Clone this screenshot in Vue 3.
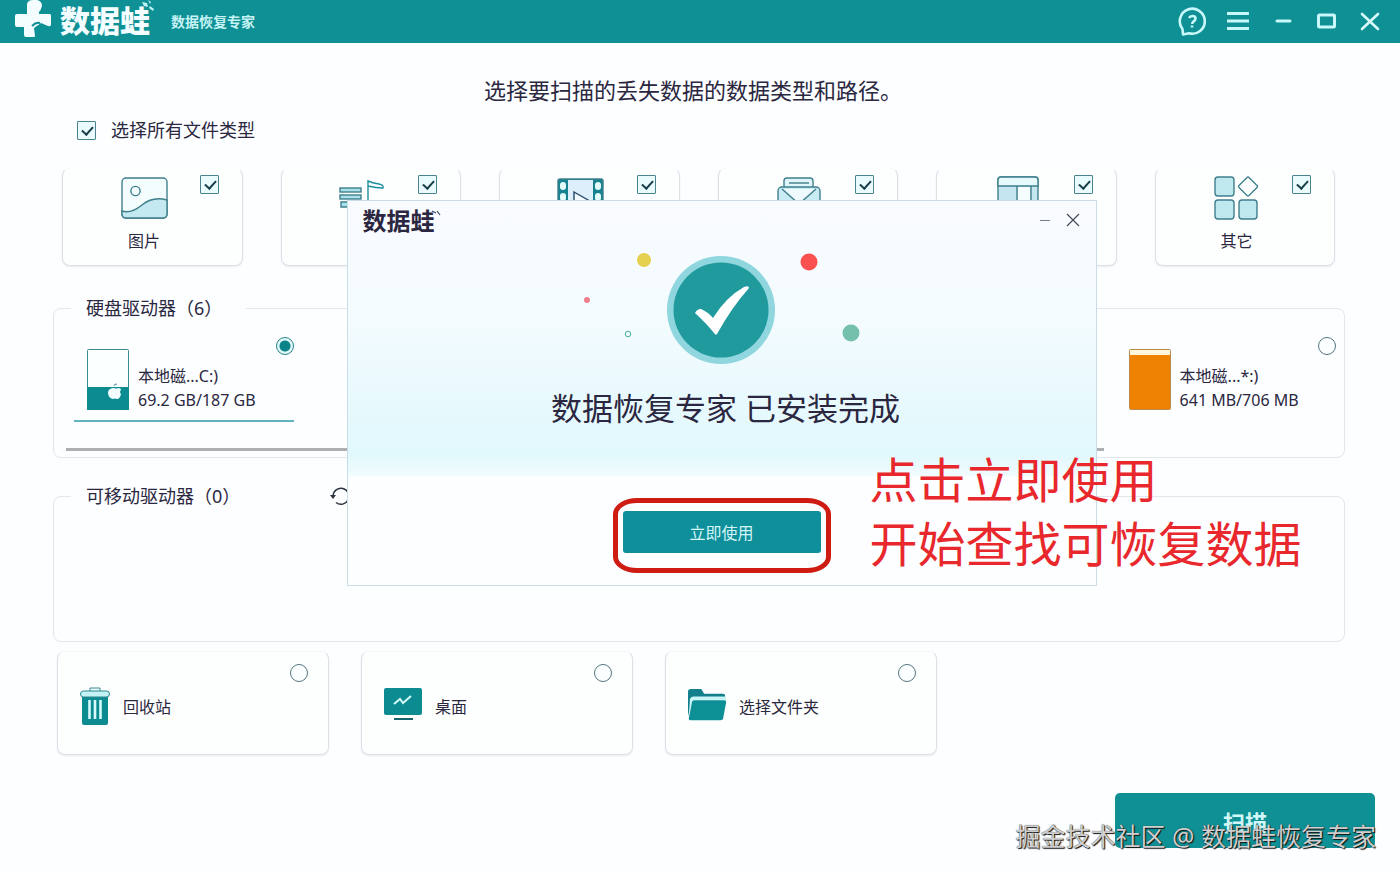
<template>
  <div class="app">
    <header class="topbar">
      <div class="brand">
        <svg class="brand-mark" width="38" height="40" viewBox="0 0 38 40">
          <path d="M13 12V4Q14 0 19 0h4q5 1 5 6-1 4-3 6v2h11q1 0 1 2v9q-1 2-3 1l-7-3-7 5 1 8q0 1-1 1h-8q-2 0-2-2V27H3q-2 0-2-2v-9q0-2 2-2h10z" fill="#f4fdff" />
          <path d="M18 26q4-4 8-3" fill="none" stroke="#0e8f94" stroke-width="2" />
        </svg>
        <span class="brand-name">数据蛙</span>
        <svg class="brand-leaf" width="12" height="12" viewBox="0 0 12 12">
          <path d="M0 2l5 1 1 4-4-1zM8 6l4 3-1 2-4-3zM6 0l3 2-1 2z" fill="#bff3f5" />
        </svg>
        <span class="brand-sub">数据恢复专家</span>
      </div>
      <nav class="window-tools">
        <button class="tool-btn help" aria-label="帮助">
          <svg width="28" height="30" viewBox="0 0 28 30" fill="none" stroke="#c9f8fa" stroke-width="2.6">
            <path d="M5 27.500L4.500 22A12.500 12.500 0 1 1 11 26.300z" stroke-linejoin="round" />
            <path d="M11 11q1-2 3.500-2 3 0 3 2.500 0 1.500-2 3-1.200 1-1.200 2.500M14 18.500v2" />
          </svg>
        </button>
        <button class="tool-btn" aria-label="菜单">
          <svg width="24" height="24" viewBox="0 0 24 24" stroke="#c9f8fa" stroke-width="3">
            <path d="M1 3.500h22M1 11h22M1 18.500h22" />
          </svg>
        </button>
        <button class="tool-btn" aria-label="最小化">
          <svg width="24" height="24" viewBox="0 0 24 24" stroke="#c9f8fa" stroke-width="3" stroke-linecap="round">
            <path d="M7 11h13" />
          </svg>
        </button>
        <button class="tool-btn" aria-label="最大化">
          <svg width="24" height="24" viewBox="0 0 24 24" fill="none" stroke="#c9f8fa" stroke-width="3">
            <rect x="4.500" y="5" width="16" height="12" rx="1" />
          </svg>
        </button>
        <button class="tool-btn" aria-label="关闭">
          <svg width="24" height="24" viewBox="0 0 24 24" stroke="#d9fafb" stroke-width="2.600" stroke-linecap="round">
            <path d="M4 4l16 15M20 4L4 19" />
          </svg>
        </button>
      </nav>
    </header>

    <main class="content">
      <h1 class="heading">选择要扫描的丢失数据的数据类型和路径。</h1>

      <label class="select-all">
        <input v-model="allChecked" type="checkbox" class="check" />
        <span>选择所有文件类型</span>
      </label>

      <!-- 文件类型 -->
      <div class="types">
        <label v-for="item in fileTypes" :key="item.id" class="type-card">
          <span class="type-main">
            <svg class="type-icon" width="48" height="46" viewBox="0 0 48 46" fill="none" stroke="#3f7f8c" stroke-width="1.400">
              <template v-if="item.id === 'image'">
                <rect x="2" y="3" width="45" height="40" rx="4" fill="#f3fdfe" />
                <path d="M2 36q9 3 20-6t25-5v14q0 4-4 4H6q-4 0-4-4z" fill="#c5e9f0" />
                <circle cx="15.500" cy="16" r="4.600" />
              </template>
              <template v-else-if="item.id === 'audio'">
                <rect x="1" y="13" width="21" height="4" fill="#a9e0ea" />
                <rect x="1" y="20" width="21" height="4" fill="#a9e0ea" />
                <path d="M2 27h10v5H2z" fill="#a9e0ea" />
                <path d="M29 30V6q4 2 11 3 5 1 4 4-7 0-15-2" stroke="#1f8fa0" />
                <ellipse cx="24" cy="33" rx="5" ry="4" />
              </template>
              <template v-else-if="item.id === 'video'">
                <rect x="1" y="4" width="45" height="38" rx="2" fill="#15828f" />
                <rect x="11" y="5" width="25" height="36" fill="#dceffb" stroke="none" />
                <path d="M17 17l14 8-14 9z" fill="#f4fbff" stroke="#27486a" />
                <g fill="#e4fbfc" stroke="none">
                  <rect x="3" y="7" width="6" height="8" rx="3" />
                  <rect x="3" y="18" width="6" height="8" rx="3" />
                  <rect x="3" y="29" width="6" height="8" rx="3" />
                  <rect x="38" y="7" width="6" height="8" rx="3" />
                  <rect x="38" y="18" width="6" height="8" rx="3" />
                  <rect x="38" y="29" width="6" height="8" rx="3" />
                </g>
              </template>
              <template v-else-if="item.id === 'mail'">
                <path d="M8 12V6q0-3 3-3h23q3 0 3 3v6" fill="#dff5fa" />
                <path d="M13 8h20" />
                <rect x="2" y="12" width="42" height="30" rx="4" fill="#c9ebf3" />
                <path d="M6 14l17 15 17-15" fill="#eefafd" />
              </template>
              <template v-else-if="item.id === 'doc'">
                <rect x="4" y="2" width="40" height="40" rx="3" fill="#c5e6f0" />
                <path d="M4 11V5q0-3 3-3h34q3 0 3 3v6z" fill="#e6fafc" />
                <path d="M24 12h12v29H24z" fill="#f5fcfe" stroke="none" />
                <path d="M23 11v31M37 11v31" />
              </template>
              <template v-else>
                <rect x="2" y="2" width="19" height="19" rx="3" fill="#bfe9ee" />
                <path d="M36 2.500l8 8q1 1 0 2l-8 8q-1 1-2 0l-8-8q-1-1 0-2l8-8q1-1 2 0z" />
                <rect x="2" y="25" width="19" height="19" rx="3" fill="#bfe9ee" />
                <rect x="26" y="25" width="18" height="19" rx="3" fill="#bfe9ee" />
              </template>
            </svg>
            <span class="type-name">{{ item.name }}</span>
          </span>
          <input v-model="item.checked" type="checkbox" class="check" />
        </label>
      </div>

      <!-- 硬盘驱动器 -->
      <fieldset class="group hard">
        <legend>硬盘驱动器（6）</legend>
        <div class="drives">
          <label
            v-for="drive in drives"
            :key="drive.id"
            class="drive"
            :class="{ selected: target === drive.id }"
          >
            <svg class="drive-icon" width="42" height="61" viewBox="0 0 42 61">
              <template v-if="drive.full">
                <rect x="0.500" y="0.500" width="41" height="60" rx="1" fill="#fff6dc" stroke="#b98a4a" />
                <rect x="1" y="6" width="40" height="54" fill="#ef8200" />
              </template>
              <template v-else>
                <rect x="0.500" y="0.500" width="41" height="60" rx="1" fill="#fcffff" stroke="#3b8b95" />
                <rect x="0" y="38" width="42" height="23" fill="#0c8b91" />
                <path d="M27 39q2 1 4 0 3 0 3 2-2 2 0 4-1 5-4 5-2-1-4 0-5-1-5-7 1-4 6-4z" fill="#f6ffff" />
                <path d="M27 37q0-2 3-2" fill="none" stroke="#3b8b95" />
              </template>
            </svg>
            <span class="drive-info">
              <span>{{ drive.name }}</span>
              <span>{{ drive.size }}</span>
            </span>
            <input v-model="target" type="radio" name="target" class="radio" :value="drive.id" />
          </label>
        </div>
        <div class="scroll-track"><div class="scroll-thumb"></div></div>
      </fieldset>

      <!-- 可移动驱动器 -->
      <fieldset class="group removable">
        <legend>
          <span>可移动驱动器（0）</span>
          <button class="refresh" aria-label="刷新">
            <svg width="20" height="20" viewBox="0 0 20 20" fill="none" stroke="#2c3440" stroke-width="1.400">
              <path d="M3 10a8 8 0 1 1 3 6.500" />
              <path d="M0 9l6 0-3 4z" fill="#2c3440" stroke="none" />
            </svg>
          </button>
        </legend>
      </fieldset>

      <!-- 其它位置 -->
      <div class="places">
        <label v-for="place in places" :key="place.id" class="place">
          <svg v-if="place.id === 'trash'" width="30" height="38" viewBox="0 0 30 38">
            <path d="M2 9h26v27q0 2-2 2H4q-2 0-2-2z" fill="#0c8b91" />
            <path d="M10 4V1h10v3" fill="#eafcfd" stroke="#3f8790" />
            <rect x="0.500" y="4" width="29" height="6" rx="3" fill="#c4f2f5" stroke="#2f8790" />
            <path d="M9.500 13v19M15 13v19M20.500 13v19" stroke="#d8fbfc" stroke-width="2.600" />
          </svg>
          <svg v-else-if="place.id === 'desktop'" width="38" height="38" viewBox="0 0 38 38">
            <rect x="0" y="1" width="38" height="27" rx="2" fill="#0c8b91" />
            <path d="M10 17l6-5 3 4 8-7" fill="none" stroke="#d8fbfc" stroke-width="2" />
            <path d="M10 32h19" stroke="#17646c" stroke-width="2" />
          </svg>
          <svg v-else width="38" height="38" viewBox="0 0 40 38">
            <path d="M0 4q0-3 3-3h11l3 5h20q2 0 2 2v4H4L0 30z" fill="#127f8c" />
            <path d="M2 12q1-3 4-3h34v4H8q-3 0-4 3L1 30z" fill="#c9f5f7" />
            <path d="M7 13h31q3 0 2 3l-3 16q0 2-3 2H3q-3 0-2-3l3-15q0-3 3-3z" fill="#0c9095" />
          </svg>
          <span class="place-name">{{ place.name }}</span>
          <input v-model="target" type="radio" name="target" class="radio" :value="place.id" />
        </label>
      </div>

      <div class="actions">
        <button class="scan-btn">扫描</button>
      </div>
    </main>

    <!-- 安装完成弹窗 -->
    <div v-if="showDialog" class="overlay">
      <section class="dialog" role="dialog" aria-label="安装完成">
        <div class="dialog-top">
          <div class="dialog-bar">
            <span class="dialog-logo">数据蛙</span>
            <svg class="dialog-leaf" width="10" height="10" viewBox="0 0 10 10">
              <path d="M1 2l4 2M6 2l3 4" stroke="#39435a" stroke-width="1.200" />
            </svg>
            <button class="dialog-btn" aria-label="最小化">
              <svg width="16" height="16" viewBox="0 0 16 16" stroke="#777e88">
                <path d="M3 7.500h10" />
              </svg>
            </button>
            <button class="dialog-btn" aria-label="关闭" @click="showDialog = false">
              <svg width="16" height="16" viewBox="0 0 16 16" stroke="#454b55" stroke-width="1.200">
                <path d="M2 1l12 12M14 1L2 13" />
              </svg>
            </button>
          </div>
          <svg class="success" width="300" height="120" viewBox="0 0 300 120">
            <circle cx="149" cy="62" r="54" fill="#8fd6de" />
            <circle cx="149" cy="62" r="47.500" fill="#219a9e" />
            <path d="M123 65q2-4 6-4 7 3 12 9 13-21 31-31 5-2 5 1-17 19-32 46-1 2-3-1-7-9-19-20z" fill="#fff" />
            <circle cx="72" cy="12" r="7" fill="#e6d14e" />
            <circle cx="237" cy="14" r="8.500" fill="#fb5050" />
            <circle cx="279" cy="85" r="8.500" fill="#75c0ac" />
            <circle cx="15" cy="52" r="3" fill="#ef7f8c" />
            <circle cx="56" cy="86" r="2.800" fill="#e9fbf8" stroke="#4fae9a" />
          </svg>
          <h2 class="dialog-title">数据恢复专家 已安装完成</h2>
        </div>
        <div class="dialog-bottom">
          <div class="frame">
            <button class="use-btn">立即使用</button>
          </div>
        </div>
        <p class="note">点击立即使用<br />开始查找可恢复数据</p>
      </section>
    </div>

    <div class="watermark">掘金技术社区 @ 数据蛙恢复专家</div>
  </div>
</template>

<script setup>
import { ref, computed } from 'vue';

const showDialog = ref(true);

// 文件类型
const fileTypes = ref([
  { id: 'image', name: '图片', checked: true },
  { id: 'audio', name: '音频', checked: true },
  { id: 'video', name: '视频', checked: true },
  { id: 'mail', name: '邮件', checked: true },
  { id: 'doc', name: '文档', checked: true },
  { id: 'other', name: '其它', checked: true },
]);

const allChecked = computed({
  get: () => fileTypes.value.every((item) => item.checked),
  set: (value) => {
    fileTypes.value.forEach((item) => {
      item.checked = value;
    });
  },
});

// 驱动器
const drives = ref([
  { id: 'c', name: '本地磁...C:)', size: '69.2 GB/187 GB', full: false },
  { id: 'd', name: '本地磁...D:)', size: '', full: false },
  { id: 'e', name: '本地磁...E:)', size: '', full: false },
  { id: 'f', name: '本地磁...F:)', size: '', full: false },
  { id: 'x', name: '本地磁...*:)', size: '641 MB/706 MB', full: true },
]);

const places = ref([
  { id: 'trash', name: '回收站' },
  { id: 'desktop', name: '桌面' },
  { id: 'folder', name: '选择文件夹' },
]);

const target = ref('c');
</script>

<style>
body {
  margin: 0;
  background: #fcfeff;
}
</style>

<style scoped>
.app {
  position: relative;
  min-height: 100vh;
  overflow: hidden;
  background: #fcfeff;
  color: #2b2740;
  font-family: "Noto Sans", "Noto Sans CJK SC", sans-serif;
  font-size: 16px;
}

.app * {
  box-sizing: border-box;
}

button {
  padding: 0;
  border: none;
  background: none;
  font-family: inherit;
  cursor: pointer;
}

svg {
  display: block;
  flex-shrink: 0;
}

.topbar {
  display: flex;
  justify-content: space-between;
  align-items: center;
  height: 43px;
  padding: 0 18px 0 14px;
  background: #0e9095;
}

.brand {
  display: flex;
  align-items: center;
  height: 43px;
}

.brand-mark {
  align-self: flex-start;
}

.brand-name {
  margin-left: 8px;
  padding-bottom: 2px;
  color: #f4fdff;
  font-size: 30px;
  line-height: 38px;
  font-weight: 900;
}

.brand-leaf {
  align-self: flex-start;
  margin-left: -8px;
}

.brand-sub {
  margin-left: 17px;
  padding-bottom: 2px;
  color: #c5f3f4;
  font-size: 14px;
  font-weight: 600;
}

.window-tools {
  display: flex;
  align-items: center;
  gap: 20px;
}

.heading {
  margin: 0;
  padding-right: 12px;
  font-size: 22px;
  line-height: 28px;
  font-weight: 400;
  text-align: center;
}

.content {
  padding: 33px 55px 26px 53px;
}

.select-all {
  display: flex;
  align-items: center;
  gap: 15px;
  width: fit-content;
  margin: 14px 0 26px 24px;
  font-size: 18px;
  line-height: 24px;
}

.check {
  position: relative;
  flex-shrink: 0;
  width: 19px;
  height: 19px;
  margin: 0;
  appearance: none;
  border: 1px solid #4a838d;
  border-radius: 1px;
  background: #eafbfd;
}

.check:checked::after {
  content: "";
  position: absolute;
  left: 6px;
  top: 2px;
  width: 5px;
  height: 9px;
  border: solid #17404a;
  border-width: 0 2px 2px 0;
  transform: rotate(42deg);
}

.types {
  display: grid;
  grid-template-columns: repeat(6, 1fr);
  gap: 38px;
  padding: 0 10px 0 9px;
}

.type-card,
.place {
  display: flex;
  border: 1px solid #dde1e6;
  border-top-color: transparent;
  border-radius: 8px;
  background: #fdffff;
  box-shadow: 0 1px 2px #e9edf0;
}

.type-card {
  justify-content: space-between;
  height: 98px;
  padding: 6px 23px 0 57px;
}

.type-main {
  display: flex;
  flex-direction: column;
  align-items: center;
}

.type-name {
  margin-top: 8px;
  line-height: 24px;
}

.group {
  min-width: 0;
  margin: 0;
  padding: 0;
  border: 1px solid #e3e7eb;
  border-radius: 8px;
}

.group legend {
  display: flex;
  align-items: center;
  margin-left: 17px;
  padding: 0 24px 0 15px;
  font-size: 18px;
  line-height: 24px;
}

.hard {
  height: 162px;
  margin-top: 30px;
}

.removable {
  height: 158px;
  margin-top: 26px;
}

.refresh {
  margin-left: 90px;
}

.drives {
  display: grid;
  grid-template-columns: repeat(5, 1fr);
  gap: 40px;
  padding: 0 8px 0 20px;
}

.drive {
  display: flex;
  align-items: flex-start;
  height: 102px;
  padding: 17px 0 0 13px;
  border-bottom: 2px solid transparent;
}

.drive.selected {
  border-bottom-color: #62b2c0;
}

.drive-icon {
  margin-top: 12px;
}

.drive-info {
  display: flex;
  flex: 1;
  flex-direction: column;
  margin: 27px 0 0 9px;
  line-height: 24px;
}

.radio {
  flex-shrink: 0;
  width: 18px;
  height: 18px;
  margin: 0;
  appearance: none;
  border: 1px solid #55747f;
  border-radius: 50%;
  background: #fcffff;
}

.radio:checked {
  border-color: #2a7f88;
  background: radial-gradient(circle, #0c8388 5px, #dff9fa 6px);
}

.scroll-track {
  margin: 26px 12px 0;
}

.scroll-thumb {
  width: 82%;
  height: 3px;
  background: #adafb3;
}

.places {
  display: flex;
  gap: 32px;
  margin-top: 9px;
  padding-left: 4px;
}

.place {
  align-items: center;
  gap: 13px;
  width: 272px;
  height: 104px;
  padding: 6px 20px 0 22px;
  border-top-color: #f4f6f8;
}

.place-name {
  flex: 1;
}

.place .radio {
  align-self: flex-start;
  margin-top: 6px;
}

.actions {
  display: flex;
  justify-content: flex-end;
  margin: 38px -30px 0 0;
}

.scan-btn {
  width: 260px;
  height: 55px;
  border-radius: 5px;
  background: #0e9095;
  color: #d3f7f8;
  font-size: 22px;
  font-weight: 600;
}

.overlay {
  position: absolute;
  inset: 0;
  display: flex;
  justify-content: center;
  align-items: flex-start;
  padding: 200px 0 0 43px;
}

.dialog {
  position: relative;
  width: 750px;
  border: 1px solid #c9dde4;
  background: #fcfeff;
}

.dialog-top {
  display: flex;
  flex-direction: column;
  align-items: center;
  height: 275px;
  background: linear-gradient(#f9fbff 0%, #f3fbfe 45%, #e0f8fd 92%, #f2fcfe 100%);
}

.dialog-bar {
  display: flex;
  align-items: center;
  align-self: stretch;
  height: 40px;
  padding: 0 15px;
}

.dialog-logo {
  font-size: 24px;
  line-height: 40px;
  font-weight: 700;
}

.dialog-leaf {
  align-self: flex-start;
  margin: 8px auto 0 -4px;
}

.dialog-btn + .dialog-btn {
  margin-left: 12px;
}

.success {
  margin-top: 7px;
}

.dialog-title {
  margin: 18px 0 0;
  padding-left: 8px;
  font-size: 31px;
  line-height: 44px;
  font-weight: 400;
}

.dialog-bottom {
  display: flex;
  justify-content: center;
  padding: 22px 0 12px;
}

.frame {
  padding: 8px 5px 15px;
  border: 5px solid #cf1c12;
  border-radius: 24px / 16px;
}

.use-btn {
  display: block;
  width: 198px;
  height: 42px;
  border-radius: 3px;
  background: #0f8f9a;
  color: #d3f5f7;
  font-size: 16px;
}

.note {
  position: absolute;
  left: 522px;
  top: 247px;
  margin: 0;
  color: #e8282c;
  font-size: 48px;
  line-height: 64px;
  white-space: nowrap;
}

.watermark {
  position: absolute;
  right: 24px;
  bottom: 20px;
  color: #cfcfcf;
  font-size: 25px;
  line-height: 36px;
  text-shadow: 1px 1px 1px #111, 0 0 1px #333;
}
</style>
